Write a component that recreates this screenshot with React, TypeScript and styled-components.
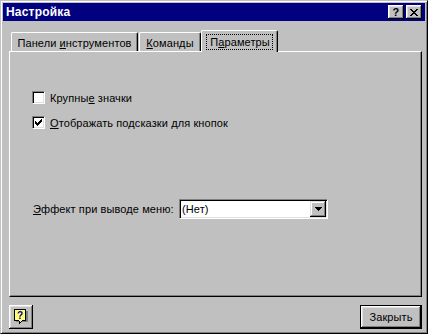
import React from 'react';
import styled, { createGlobalStyle } from 'styled-components';

const GlobalStyle = createGlobalStyle`
  html, body {
    margin: 0;
    padding: 0;
    background: #c0c0c0;
  }
  body {
    font-family: "Liberation Sans", Arial, sans-serif;
    font-size: 11px;
    letter-spacing: 0.1px;
    color: #000;
  }
`;

// окно диалога с рамкой в стиле Win95
const Window = styled.div`
  box-sizing: border-box;
  width: 428px;
  height: 334px;
  background: #c0c0c0;
  border: 1px solid;
  border-color: #c0c0c0 #000 #000 #c0c0c0;
  box-shadow: inset 1px 1px #fff, inset -1px -1px #808080;
  padding: 2px;
  display: flex;
  flex-direction: column;
`;

const TitleBar = styled.div`
  height: 18px;
  flex: none;
  background: #000080;
  display: flex;
  align-items: center;
  padding: 0 3px 0 3px;
`;

const TitleText = styled.span`
  color: #fff;
  font-weight: bold;
  font-size: 12px;
  letter-spacing: 0.2px;
`;

const TitleButtons = styled.div`
  margin-left: auto;
  display: flex;
  gap: 2px;
`;

const TitleButton = styled.div`
  box-sizing: border-box;
  width: 16px;
  height: 14px;
  background: #c0c0c0;
  box-shadow: inset -1px -1px #000, inset 1px 1px #fff, inset -2px -2px #808080, inset 2px 2px #dfdfdf;
  display: flex;
  align-items: center;
  justify-content: center;
  font-weight: bold;
  font-size: 11px;
  line-height: 1;
`;

const Body = styled.div`
  flex: 1;
  display: flex;
  flex-direction: column;
  padding: 9px 3px 2px 6px;
`;

const TabStrip = styled.div`
  display: flex;
  align-items: flex-end;
  height: 21px;
  padding-left: 2px;
  position: relative;
  z-index: 1;
`;

const Tab = styled.div<{ $w: number; $active?: boolean; $gap?: number }>`
  box-sizing: border-box;
  width: ${p => p.$w}px;
  height: ${p => (p.$active ? 22 : 19)}px;
  margin-bottom: ${p => (p.$active ? -1 : 0)}px;
  margin-left: ${p => p.$gap || 0}px;
  background: #c0c0c0;
  border-left: 1px solid #fff;
  border-top: 1px solid #fff;
  border-right: 1px solid #000;
  border-top-left-radius: 2px;
  border-top-right-radius: 2px;
  box-shadow: inset -1px 0 #808080;
  display: flex;
  align-items: center;
  justify-content: center;
  padding-top: ${p => (p.$active ? 0 : 2)}px;
  white-space: nowrap;
`;

const Focus = styled.span`
  border: 1px dotted #000;
  padding: 1px 2px 1px 3px;
  line-height: 12px;
`;

const U = styled.span`
  text-decoration: underline;
  text-underline-offset: 1px;
`;

const Panel = styled.div`
  box-sizing: border-box;
  height: 246px;
  flex: none;
  border: 1px solid;
  border-color: #fff #000 #000 #fff;
  box-shadow: inset -1px -1px #808080;
  padding: 39px 0 0 22px;
  display: flex;
  flex-direction: column;
`;

const CheckRow = styled.label<{ $top?: number }>`
  display: flex;
  align-items: center;
  gap: 5px;
  height: 13px;
  margin-top: ${p => p.$top || 0}px;
  white-space: nowrap;
`;

const CheckBox = styled.span`
  box-sizing: border-box;
  width: 13px;
  height: 13px;
  background: #fff;
  border: 1px solid;
  border-color: #808080 #fff #fff #808080;
  box-shadow: inset 1px 1px #000, inset -1px -1px #dfdfdf;
  display: flex;
  align-items: center;
  justify-content: center;
`;

const ComboRow = styled.div`
  display: flex;
  align-items: center;
  margin-top: 70px;
  height: 20px;
`;

const ComboLabel = styled.span`
  width: 146px;
  margin-left: 1px;
  white-space: nowrap;
`;

const Combo = styled.div`
  box-sizing: border-box;
  width: 149px;
  height: 20px;
  background: #fff;
  border: 1px solid;
  border-color: #808080 #fff #fff #808080;
  box-shadow: inset 1px 1px #000, inset -1px -1px #dfdfdf;
  display: flex;
  align-items: center;
  padding: 1px 1px 1px 2px;
`;

const ComboValue = styled.span`
  flex: 1;
`;

const DropButton = styled.div`
  box-sizing: border-box;
  width: 16px;
  height: 16px;
  background: #c0c0c0;
  box-shadow: inset -1px -1px #000, inset 1px 1px #dfdfdf, inset -2px -2px #808080, inset 2px 2px #fff;
  display: flex;
  align-items: center;
  justify-content: center;
`;

const Footer = styled.div`
  display: flex;
  justify-content: space-between;
  margin-top: 8px;
  height: 24px;
`;

const Button = styled.div<{ $w: number; $default?: boolean }>`
  box-sizing: border-box;
  width: ${p => p.$w}px;
  height: 24px;
  background: #c0c0c0;
  border: ${p => (p.$default ? '1px solid #000' : 'none')};
  box-shadow: inset -1px -1px #000, inset 1px 1px #fff, inset -2px -2px #808080, inset 2px 2px #dfdfdf;
  display: flex;
  align-items: center;
  justify-content: center;
  font-size: 11px;
`;

const CloseIcon = () => (
  <svg width="8" height="7" viewBox="0 0 8 7" shapeRendering="crispEdges">
    <rect x="0" y="0" width="2" height="1" />
    <rect x="6" y="0" width="2" height="1" />
    <rect x="1" y="1" width="2" height="1" />
    <rect x="5" y="1" width="2" height="1" />
    <rect x="2" y="2" width="4" height="1" />
    <rect x="3" y="3" width="2" height="1" />
    <rect x="2" y="4" width="4" height="1" />
    <rect x="1" y="5" width="2" height="1" />
    <rect x="5" y="5" width="2" height="1" />
    <rect x="0" y="6" width="2" height="1" />
    <rect x="6" y="6" width="2" height="1" />
  </svg>
);

const CheckMark = () => (
  <svg width="7" height="7" viewBox="0 0 7 7" shapeRendering="crispEdges">
    {[2, 3, 4, 3, 2, 1, 0].map((y, x) => (
      <rect key={x} x={x} y={y} width="1" height="3" />
    ))}
  </svg>
);

const DownArrow = () => (
  <svg width="7" height="4" viewBox="0 0 7 4" shapeRendering="crispEdges">
    <rect x="0" y="0" width="7" height="1" />
    <rect x="1" y="1" width="5" height="1" />
    <rect x="2" y="2" width="3" height="1" />
    <rect x="3" y="3" width="1" height="1" />
  </svg>
);

const HelpIcon = () => (
  <svg width="14" height="16" viewBox="0 0 14 16" shapeRendering="crispEdges">
    <defs>
      <pattern id="dither" width="2" height="2" patternUnits="userSpaceOnUse">
        <rect width="2" height="2" fill="#ffff00" />
        <rect width="1" height="1" fill="#fff" />
        <rect x="1" y="1" width="1" height="1" fill="#fff" />
      </pattern>
    </defs>
    <rect x="2" y="2" width="12" height="11" fill="#808080" />
    <rect x="0.5" y="0.5" width="11" height="11" fill="url(#dither)" stroke="#000" />
    <path d="M5 11 L8 11 L6 14 Z" fill="url(#dither)" />
    <path d="M5.5 11.5 L5.5 14.5 L8.5 11.5" fill="none" stroke="#000" />
    <text x="6" y="9.5" textAnchor="middle" fontFamily="Liberation Sans, Arial, sans-serif" fontWeight="bold" fontSize="10" fill="#000080">?</text>
  </svg>
);

export default function App() {
  return (
    <>
      <GlobalStyle />
      <Window>
        <TitleBar>
          <TitleText>Настройка</TitleText>
          <TitleButtons>
            <TitleButton>?</TitleButton>
            <TitleButton><CloseIcon /></TitleButton>
          </TitleButtons>
        </TitleBar>
        <Body>
          <TabStrip>
            <Tab $w={127}><span>Панели <U>и</U>нструментов</span></Tab>
            <Tab $w={62} $gap={1}><span><U>К</U>оманды</span></Tab>
            <Tab $w={77} $active><Focus>П<U>а</U>раметры</Focus></Tab>
          </TabStrip>
          <Panel>
            <CheckRow>
              <CheckBox />
              <span>Крупны<U>е</U> значки</span>
            </CheckRow>
            <CheckRow $top={12}>
              <CheckBox><CheckMark /></CheckBox>
              <span><U>О</U>тображать подсказки для кнопок</span>
            </CheckRow>
            <ComboRow>
              <ComboLabel><U>Э</U>ффект при выводе меню:</ComboLabel>
              <Combo>
                <ComboValue>(Нет)</ComboValue>
                <DropButton><DownArrow /></DropButton>
              </Combo>
            </ComboRow>
          </Panel>
          <Footer>
            <Button $w={24}><HelpIcon /></Button>
            <Button $w={62} $default>Закрыть</Button>
          </Footer>
        </Body>
      </Window>
    </>
  );
}
